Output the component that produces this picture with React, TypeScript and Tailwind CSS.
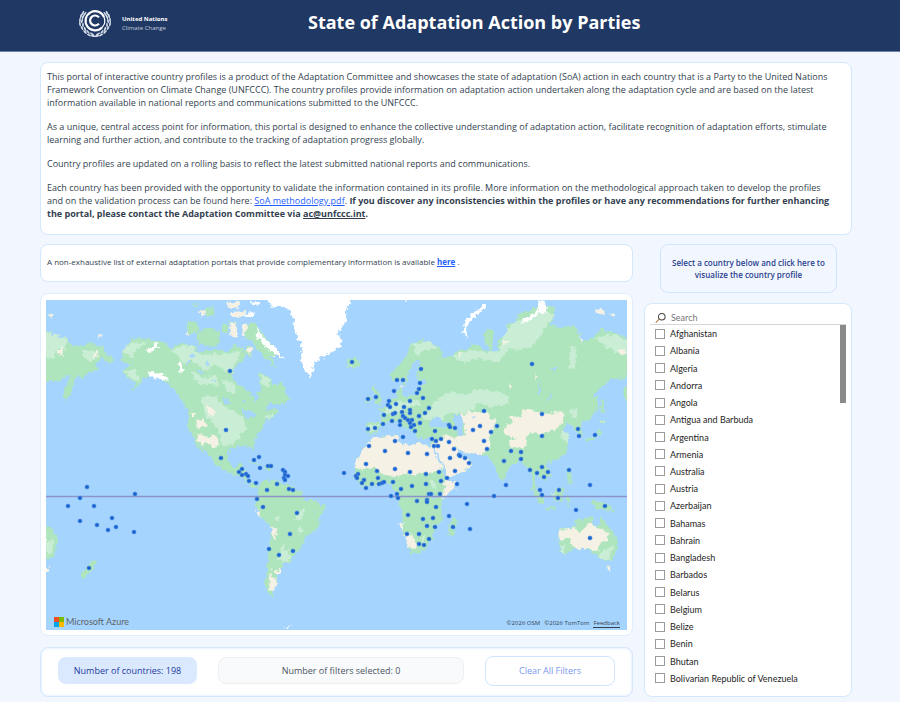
import React from "react";

const COUNTRIES = [
  "Afghanistan", "Albania", "Algeria", "Andorra", "Angola", "Antigua and Barbuda", "Argentina",
  "Armenia", "Australia", "Austria", "Azerbaijan", "Bahamas", "Bahrain", "Bangladesh", "Barbados",
  "Belarus", "Belgium", "Belize", "Benin", "Bhutan", "Bolivarian Republic of Venezuela",
];

// Country markers, in map units.
const DOTS: [number, number][] = [
  [230,371],[226,430],[221,458],[352,362],[421,369],[397,380],[403,380],[420,383],[419,389],[417,393],
  [394,391],[423,398],[376,397],[368,399],[410,401],[389,401],[388,405],[390,407],[396,404],[404,407],
  [410,410],[410,413],[429,408],[425,413],[419,416],[384,415],[393,414],[395,413],[402,412],[403,416],
  [405,418],[408,420],[412,420],[400,421],[392,421],[400,425],[410,423],[414,425],[411,427],[415,431],
  [420,423],[383,424],[375,428],[368,429],[403,437],[395,441],[369,446],[385,451],[408,453],[427,454],
  [366,464],[395,469],[259,457],[254,460],[260,468],[268,466],[271,466],[283,470],[532,364],[542,414],
  [542,436],[484,411],[497,426],[480,426],[473,430],[491,432],[484,441],[487,449],[449,425],[450,427],
  [455,428],[435,431],[432,439],[436,441],[441,439],[434,446],[438,446],[449,442],[454,449],[459,455],
  [460,456],[465,458],[469,463],[450,458],[511,451],[521,452],[521,459],[504,461],[530,470],[542,467],
  [578,429],[579,436],[595,435],[569,470],[87,487],[80,498],[68,506],[94,506],[80,521],[112,518],
  [97,525],[108,530],[116,527],[134,532],[135,494],[89,568],[239,472],[242,469],[242,475],[246,474],
  [248,476],[249,481],[256,483],[285,472],[285,475],[288,476],[284,478],[285,480],[277,484],[267,490],
  [289,489],[293,490],[257,499],[263,507],[297,513],[290,534],[269,549],[279,555],[293,551],[344,473],
  [377,471],[378,478],[358,474],[356,476],[357,478],[364,480],[362,483],[366,488],[372,484],[379,484],
  [382,483],[384,482],[393,482],[410,472],[426,474],[412,486],[426,484],[401,489],[397,494],[391,496],
  [398,498],[417,501],[427,500],[427,502],[429,494],[408,515],[423,519],[427,526],[407,534],[419,534],
  [419,544],[424,545],[429,539],[439,472],[441,481],[447,478],[455,471],[457,484],[440,494],[431,494],
  [436,507],[433,518],[435,527],[449,516],[467,504],[453,527],[470,529],[494,496],[506,485],[537,473],
  [548,472],[544,477],[540,490],[542,495],[559,490],[558,498],[590,485],[576,510],[605,506],[590,538],
];

const LAND = [
  // Chukotka
  "M40 330L52 333 57 337 67 338 70 345 80 346 90 343 102 347 106 354 114 358 112 362 108 363 102 358 97 363 98 370 87 373 82 377 75 378 73 384 72 390 65 403 63 393 68 383 70 375 67 376 60 381 40 381Z",
  // North and Central America
  "M122 358L123 350 128 348 127 342 137 338 150 340 165 343 171 349 180 343 190 345 200 352 214 350 227 352 233 345 238 345 245 352 245 357 237 365 232 373 233 380 247 390 253 398 257 402 258 393 262 388 259 380 259 372 270 377 272 385 282 382 285 393 292 398 283 404 270 404 264 409 277 409 280 412 272 418 266 420 262 430 253 441 255 453 252 449 248 445 237 447 230 449 227 454 230 464 236 468 240 463 244 463 242 470 247 474 248 482 257 485 258 488 250 486 243 478 232 474 222 470 216 464 206 453 199 443 203 453 196 444 188 427 188 410 183 402 176 393 168 383 157 377 148 375 141 384 128 392 137 383 125 377 123 370 132 365 120 361Z",
  // Canadian archipelago
  "M187 323L192 320 198 324 198 332 190 334 187 330ZM198 332L208 328 218 332 221 342 212 347 200 344 196 338ZM192 305L199 302 197 307ZM205 309L213 306 216 315 205 318ZM222 325L229 323 228 334 222 333ZM231 322L237 321 237 332 231 330ZM243 325L255 323 272 345 282 357 270 355 278 369 264 358 254 343 243 334ZM246 346L252 346 251 356 246 354Z",
  // South America
  "M258 487L263 480 280 482 293 487 302 493 303 500 317 500 325 507 320 517 317 530 305 537 302 547 292 557 290 562 283 562 282 568 277 572 277 583 272 592 275 598 270 595 265 587 267 567 269 547 272 527 262 518 257 508 255 500 259 493Z",
  // Eurasia
  "M392 380L391 373 400 365 407 353 412 343 423 340 430 343 440 348 444 357 436 359 452 356 457 350 467 350 473 343 485 350 490 354 485 343 485 332 491 328 493 333 493 352 498 352 497 340 508 336 507 325 517 323 518 315 530 310 540 305 556 308 553 318 550 325 563 328 573 325 580 333 582 342 592 337 598 333 600 330 613 332 635 340 635 373 620 380 610 380 598 390 592 396 598 397 598 407 590 420 582 423 580 428 583 435 577 434 572 425 567 423 563 432 568 440 568 448 562 457 550 462 547 464 551 475 545 481 538 476 535 475 535 485 542 495 533 487 532 475 528 468 523 463 520 460 510 466 507 472 502 483 498 475 495 465 488 456 478 454 463 452 456 447 460 457 469 460 473 463 463 472 447 478 442 468 432 450 430 446 433 438 424 438 416 436 414 433 410 429 408 424 402 418 410 427 406 430 403 426 397 421 390 422 382 426 378 431 373 435 367 433 367 422 380 422 382 413 377 410 387 407 390 400 397 397 398 387 403 390 403 397 415 395 417 384 425 382 416 380 416 368 420 360 415 360 410 368 407 381 404 386 401 381Z",
  // Kamchatka, Sakhalin, Japan, Korea
  "M624 388L635 384 635 404 624 400ZM601 398L604 403 603 415 601 412ZM601 419L606 421 602 425 600 423ZM600 427L601 434 595 438 585 441 586 438 596 435Z",
  // British Isles, Iceland, Novaya Zemlya
  "M374 384L378 391 382 400 380 404 374 403 376 398 372 391ZM367 397L371 395 371 402 366 403ZM347 360L355 358 360 361 355 369 348 366Z",
  // Africa
  "M373 438L385 436 397 435 398 441 407 446 417 443 430 446 434 449 438 460 443 472 448 481 457 481 455 487 445 497 441 503 443 515 440 523 435 528 433 537 427 547 420 552 412 554 407 545 403 532 402 510 397 500 396 493 392 485 383 483 373 486 365 488 358 480 355 475 356 463 362 450 368 444ZM455 517L457 521 454 534 450 537 449 530 450 522Z",
  // South-east Asia
  "M530 487L537 491 544 500 544 506 538 502ZM545 507L557 508 556 510 546 509ZM551 494L563 486 564 492 561 502 553 499ZM566 495L571 497 568 507ZM566 466L570 472 573 482 570 485 566 475ZM590 500L602 501 610 506 614 512 602 510 595 508ZM556 457L558 459 556 463Z",
  // Australia and New Zealand
  "M558 532L563 529 573 527 575 522 583 520 587 517 592 517 592 523 598 527 602 515 605 522 610 528 618 538 617 550 612 560 603 561 597 555 590 550 580 548 573 549 565 553 560 553 559 542ZM606 566L611 567 609 571ZM40 523L48 526 55 533 58 543 53 557 40 562ZM91 561L98 560 94 567 84 579 80 576Z",
  // Caribbean
  "M248 461L256 463 262 467 254 464ZM264 466L273 467 271 469 264 468Z",
];

const MEADOW = [
  "M40 330L67 338 66 350 58 348 53 360 40 353ZM82 350L100 352 92 363 84 357ZM122 350L132 342 148 344 136 350 132 358ZM124 370L135 370 140 382 128 377ZM172 350L186 344 203 355 233 353 241 350 231 374 215 365 205 370 190 360 185 364ZM190 370L205 378 215 375 220 386 198 384ZM201 396L215 397 226 407 244 417 246 430 230 446 222 446 218 428 206 417ZM222 380L232 382 236 392 226 392ZM260 374L271 379 268 388 262 383ZM262 419L276 411 271 418Z",
  "M412 344L426 341 438 348 424 350 416 356ZM452 357L470 350 487 353 500 352 502 338 510 326 540 310 555 315 545 328 535 345 520 350 509 348 500 362 480 358 464 362ZM433 402L448 392 465 394 480 388 507 395 509 404 490 408 478 402 470 413 450 413 440 420 430 414ZM570 345L577 350 574 370 569 367ZM594 338L615 334 632 342 632 358 612 350ZM570 409L578 407 576 420 571 417ZM560 430L568 433 568 443 561 438Z",
  "M387 407L398 401 418 400 422 405 408 407 394 415 383 413ZM369 425L378 425 376 431 369 431ZM420 415L430 411 440 415 426 420ZM550 492L556 493 553 497Z",
  "M301 508L305 508 302 519 294 521ZM275 516L281 517 280 521 275 520ZM300 525L306 530 298 535ZM282 544L286 550 292 558 283 562 278 558ZM407 532L412 536 407 541ZM420 538L426 536 424 543ZM560 545L565 547 565 553 560 552ZM600 552L609 547 615 546 609 560 600 560ZM46 543L54 540 51 553 46 556ZM430 480L437 484 434 492Z",
];

const SAND = [
  "M373 438L397 435 398 441 407 446 417 443 430 446 434 449 438 460 442 470 434 470 430 475 420 474 415 477 405 473 397 477 380 473 374 468 356 469 356 463 362 450 368 444Z",
  "M430 446L436 441 447 434 456 440 456 447 460 457 469 460 472 464 463 472 447 478 442 468 434 452ZM444 481L457 481 455 487 443 500 440 494 446 488Z",
  "M460 415L478 411 488 412 490 420 497 418 494 430 488 438 490 446 482 455 463 452 456 446 455 436 466 436 464 425Z",
  "M508 417L522 416 523 410 537 411 549 414 563 411 564 422 555 430 543 434 530 433 527 438 526 446 514 448 508 442 516 438 503 434 505 426 513 422Z",
  "M196 421L203 419 207 425 198 428ZM197 434L208 437 216 434 220 445 213 448 206 440 204 445 198 441ZM206 404L212 409 218 413 209 416ZM191 412L195 412 195 417 191 416ZM56 352L63 347 62 357ZM94 352L97 351 98 359 93 357Z",
  "M404 534L414 536 417 546 410 548 406 544ZM400 521L403 522 403 534ZM257 509L262 517 258 514ZM271 527L277 530 276 541 271 532ZM271 566L272 577 277 578 275 590 268 591 270 578ZM281 568L275 572 277 575 281 574Z",
  "M558 532L573 527 580 532 590 523 599 528 609 532 607 541 600 542 597 552 590 548 580 549 573 547 568 539 559 540ZM606 566L611 567 609 571ZM40 532L47 534 47 541 40 542ZM40 567L50 567 48 571 40 571Z",
  "M230 323L236 322 238 336 231 337ZM242 326L247 324 246 334 241 337ZM230 312L247 311 245 316 231 317ZM226 302L240 300 239 308 230 309ZM198 311L206 312 202 316ZM188 332L190 334 188 335ZM247 348L251 347 250 355ZM502 340L508 342 504 346ZM580 336L583 340 582 344ZM617 350L625 349 622 356ZM400 385L404 386 402 390ZM596 308L605 311 604 315 598 314ZM609 313L615 314 613 317ZM600 421L606 420 603 423ZM457 353L463 352 460 359ZM510 382L513 386 509 389ZM535 375L538 378 536 381ZM347 361L350 366 354 368 349 364ZM45 314L54 315 52 317ZM98 335L104 336 99 337Z",
];

const ICE = [
  "M265 296L273 307 285 307 293 315 295 333 300 343 302 353 302 368 306 373 311 378 315 362 330 353 340 347 344 341 337 334 343 327 347 320 345 312 351 303 349 296Z",
  "M486 303L479 308 470 314 465 322 462 333 467 338 466 328 472 320 480 312 487 307ZM541 297L546 303 548 309 544 314 540 313 530 321 521 324 523 319 538 311 538 305ZM147 372L150 371 155 373 163 373 168 381 157 378 150 377ZM145 350L151 348 157 343 159 348 149 352ZM178 361L181 363 185 371 181 373ZM256 325L260 333 268 342 276 348 283 358 277 356 266 347 257 338ZM244 313L255 312 254 317 246 317ZM250 302L260 300 259 306 253 305ZM402 300L408 300 406 302ZM285 628L291 625 287 629Z",
];

const WATER = [
  // Black, Caspian, Aral and inland seas
  "M429 421L435 417 441 419 448 424 446 428 436 427 430 427Z",
  "M454 415L460 414 463 422 461 427 464 435 459 436 456 428 454 421Z",
  "M442 466L434 452 432 449 436 451 446 470 448 478 445 479Z",
  "M417 366L421 360 417 373 418 381 427 379 425 384 417 388 414 395 408 395 409 383 413 373Z",
  "M547 400L550 396 552 392 551 398 544 404ZM551 367L556 368 554 373ZM538 380L541 392 539 394ZM473 416L476 417 473 418Z",
  // Canadian and Great Lakes
  "M222 395L226 398 230 404 226 404ZM198 368L205 373 200 374ZM191 353L196 355 192 358ZM212 378L218 383 213 382ZM240 409L252 411 256 416 246 418 243 413ZM186 361L189 361 188 363ZM207 360L210 366 206 365ZM244 400L248 402 244 402Z",
  "M432 495L436 497 433 500ZM314 511L317 512 315 514Z",
];

const FONT = "font-['Open_Sans','Noto_Sans',sans-serif]";
const COMPACT = "font-['Lato','Noto_Sans',sans-serif] text-[9px]";
const CARD = "rounded-lg border border-[#d3e7fd] bg-white";

function Shapes({ paths, fill }: { paths: string[]; fill: string }) {
  return (
    <g fill={fill}>
      {paths.map((d) => (
        <path key={d} d={d} />
      ))}
    </g>
  );
}

function WorldMap() {
  return (
    <svg viewBox="46 300 581 330" preserveAspectRatio="xMidYMid slice" className="block h-auto w-full bg-[#a5d5ff]" role="img" aria-label="World map of country profiles">
      <defs>
        <filter id="coast" x="0" y="0" width="100%" height="100%" filterUnits="objectBoundingBox">
          <feTurbulence type="fractalNoise" baseFrequency="0.22" numOctaves="3" seed="4" result="n" />
          <feDisplacementMap in="SourceGraphic" in2="n" scale="7" xChannelSelector="R" yChannelSelector="G" />
        </filter>
      </defs>
      <rect x="46" y="300" width="581" height="330" fill="#a5d5ff" />
      <g filter="url(#coast)">
        <Shapes paths={LAND} fill="#aee5bc" />
        <Shapes paths={MEADOW} fill="#c9eed5" />
        <Shapes paths={SAND} fill="#f5f1e4" />
        <Shapes paths={WATER} fill="#a5d5ff" />
        <Shapes paths={ICE} fill="#ffffff" />
      </g>
      <path d="M46 496.5H627" stroke="#8d93c6" strokeWidth="1.3" />
      <g fill="#1763cf" stroke="#5c93e6" strokeOpacity="0.55" strokeWidth="1">
        {DOTS.map(([x, y]) => (
          <circle key={`${x}-${y}`} cx={x} cy={y} r="2.1" />
        ))}
      </g>
    </svg>
  );
}

// One branch of the wreath: leaf centre and rotation.
const LEAVES = [
  [5, 4, 25], [3, 7, 15], [2, 11, 5], [2, 15, -10], [4, 19, -30], [7, 23, -45], [11, 26, -65], [15, 27, -80],
  [7, 5, 35], [5, 8, 25], [4, 12, 15], [5, 16, 0], [7, 20, -20], [10, 23, -40], [14, 25, -60],
];

function Laurel() {
  return (
    <g fill="#d3dbe8">
      {LEAVES.map(([x, y, r]) => (
        <ellipse key={`${x}-${y}`} cx={x} cy={y} rx="0.9" ry="2.3" transform={`rotate(${r} ${x} ${y})`} />
      ))}
    </g>
  );
}

function Logo() {
  return (
    <svg viewBox="0 0 34 30" className="h-[30px] w-[34px]" aria-hidden="true">
      <Laurel />
      <g transform="translate(34 0) scale(-1 1)">
        <Laurel />
      </g>
      <circle cx="17" cy="11.5" r="11" fill="#203864" />
      <g fill="none" stroke="#ffffff">
        <path d="M24 18.5A9.6 9.6 0 1 1 26.2 8.5" strokeWidth="2.1" />
        <path d="M21 8.4A5 5 0 1 0 21 14.6" strokeWidth="2.2" />
        <path d="M26.2 8.5A9.6 9.6 0 0 1 24 18.5" strokeWidth="1.2" />
      </g>
    </svg>
  );
}

export default function App() {
  return (
    <div className={`min-h-screen bg-[#f2f7ff] pb-1 ${FONT} text-[9px] text-[#333f50]`}>
      <header className="flex h-13 items-start border-b border-[#6e83a8] bg-[#203864] pl-[78px] text-white">
        <div className="flex w-[230px] items-center gap-[10px] pt-[9px]">
          <Logo />
          <p className="text-[6px] leading-[9px] text-[#c5cede]">
            <strong className="font-bold text-white">United Nations</strong>
            <br />
            Climate Change
          </p>
        </div>
        <h1 className="pt-[10px] text-[18px] leading-6 font-bold whitespace-nowrap">State of Adaptation Action by Parties</h1>
      </header>

      <main className="flex flex-col gap-[9px] pt-[10px] pr-12 pl-10">
        <section className={`${CARD} flex flex-col gap-[11px] px-[6px] pt-[7px] pb-[14px] leading-[13px]`}>
          <p>
            This portal of interactive country profiles is a product of the Adaptation Committee and showcases the state of adaptation (SoA) action in each country that is a Party to the United Nations
            <br />
            Framework Convention on Climate Change (UNFCCC). The country profiles provide information on adaptation action undertaken along the adaptation cycle and are based on the latest
            <br />
            information available in national reports and communications submitted to the UNFCCC.
          </p>
          <p>
            As a unique, central access point for information, this portal is designed to enhance the collective understanding of adaptation action, facilitate recognition of adaptation efforts, stimulate
            <br />
            learning and further action, and contribute to the tracking of adaptation progress globally.
          </p>
          <p>Country profiles are updated on a rolling basis to reflect the latest submitted national reports and communications.</p>
          <p>
            Each country has been provided with the opportunity to validate the information contained in its profile. More information on the methodological approach taken to develop the profiles
            <br />
            and on the validation process can be found here:{" "}
            <a href="#methodology" className="text-[#1f5fff] underline">SoA methodology.pdf</a>.{" "}
            <strong className="font-bold">
              If you discover any inconsistencies within the profiles or have any recommendations for further enhancing
              <br />
              the portal, please contact the Adaptation Committee via{" "}
              <a href="#contact" className="underline">ac@unfccc.int</a>.
            </strong>
          </p>
        </section>

        <div className="grid grid-cols-[minmax(0,1fr)_208px] gap-[11px]">
          <div className="flex flex-col gap-[11px]">
            <section className={`${CARD} px-[6px] pt-[9px] pb-3 text-[8px] leading-[15px]`}>
              A non-exhaustive list of external adaptation portals that provide complementary information is available{" "}
              <a href="#portals" className="font-bold text-[#1f5fff] underline">here</a> .
            </section>

            <section className="rounded-lg border border-[#e0edfd] bg-white p-[5px] pt-[6px]">
              <div className="relative">
                <WorldMap />
                <div className={`absolute bottom-[2px] left-2 flex items-center gap-[2px] ${COMPACT} leading-3 text-[#5f6368]`}>
                  <span className="grid grid-cols-2" aria-hidden="true">
                    <i className="size-[5px] bg-[#f25022]" />
                    <i className="size-[5px] bg-[#7fba00]" />
                    <i className="size-[5px] bg-[#00a4ef]" />
                    <i className="size-[5px] bg-[#ffb900]" />
                  </span>
                  Microsoft Azure
                </div>
                <div className="absolute right-[7px] bottom-[2px] flex gap-1 text-[6px] leading-2 text-[#333f50]">
                  <span>©2026 OSM</span>
                  <span>©2026 TomTom</span>
                  <a href="#feedback" className="border-b border-[#333f50]">Feedback</a>
                </div>
              </div>
            </section>

            <section className="flex h-[50px] items-start gap-[21px] rounded-lg border border-[#d3e7fd] bg-white px-[17px] pt-2 shadow-[inset_0_0_2px_1px_#eaf3ff]">
              <p className="mt-px flex h-[27px] w-[139px] items-center justify-center rounded-lg bg-[#dbe9ff] text-[#233a9c]">Number of countries: 198</p>
              <p className="mt-px flex h-[27px] flex-1 items-center justify-center rounded-lg border border-[#eeeff1] bg-[#f9fafb] text-[#4b5563]">Number of filters selected: 0</p>
              <button type="button" className="h-[30px] w-[130px] rounded-lg border border-[#d0e5fd] bg-white text-[#7c97f0]">Clear All Filters</button>
            </section>
          </div>

          <div className="flex flex-col gap-[10px]">
            <button type="button" className="mr-[15px] ml-4 h-[49px] rounded-lg border border-[#cfe5fd] text-[8px] leading-3 font-semibold text-[#2a3f8f]">
              Select a country below and click here to
              <br />
              visualize the country profile
            </button>

            <section className={`${CARD} ${COMPACT} flex flex-1 flex-col px-[5px] pt-[7px] pb-[9px]`}>
              <label className="flex h-[14px] items-center gap-[5px] border-b border-[#d6d6d6] pl-[5px]">
                <svg viewBox="0 0 12 12" className="size-3" fill="none" aria-hidden="true">
                  <circle cx="7.4" cy="4.6" r="3.6" stroke="#444444" strokeWidth="1.1" />
                  <path d="M4.7 7.2L0.8 11" stroke="#b97a3a" strokeWidth="1.1" />
                </svg>
                <input type="search" aria-label="Search" placeholder="Search" className="w-full bg-transparent outline-none placeholder:text-[#777777]" />
              </label>
              <div className="flex flex-1">
                <ul className="flex flex-1 flex-col leading-[17px] text-[#252423]">
                  {COUNTRIES.map((name) => (
                    <li key={name} className="flex flex-1 items-center">
                      <label className="flex items-center gap-[5px] pl-[5px]">
                        <input type="checkbox" className="size-[10px] shrink-0 appearance-none border border-[#9b9b9b] bg-white" />
                        {name}
                      </label>
                    </li>
                  ))}
                </ul>
                <div className="h-[78px] w-[6px] bg-[#8a8a8a]" />
              </div>
            </section>
          </div>
        </div>
      </main>
    </div>
  );
}
